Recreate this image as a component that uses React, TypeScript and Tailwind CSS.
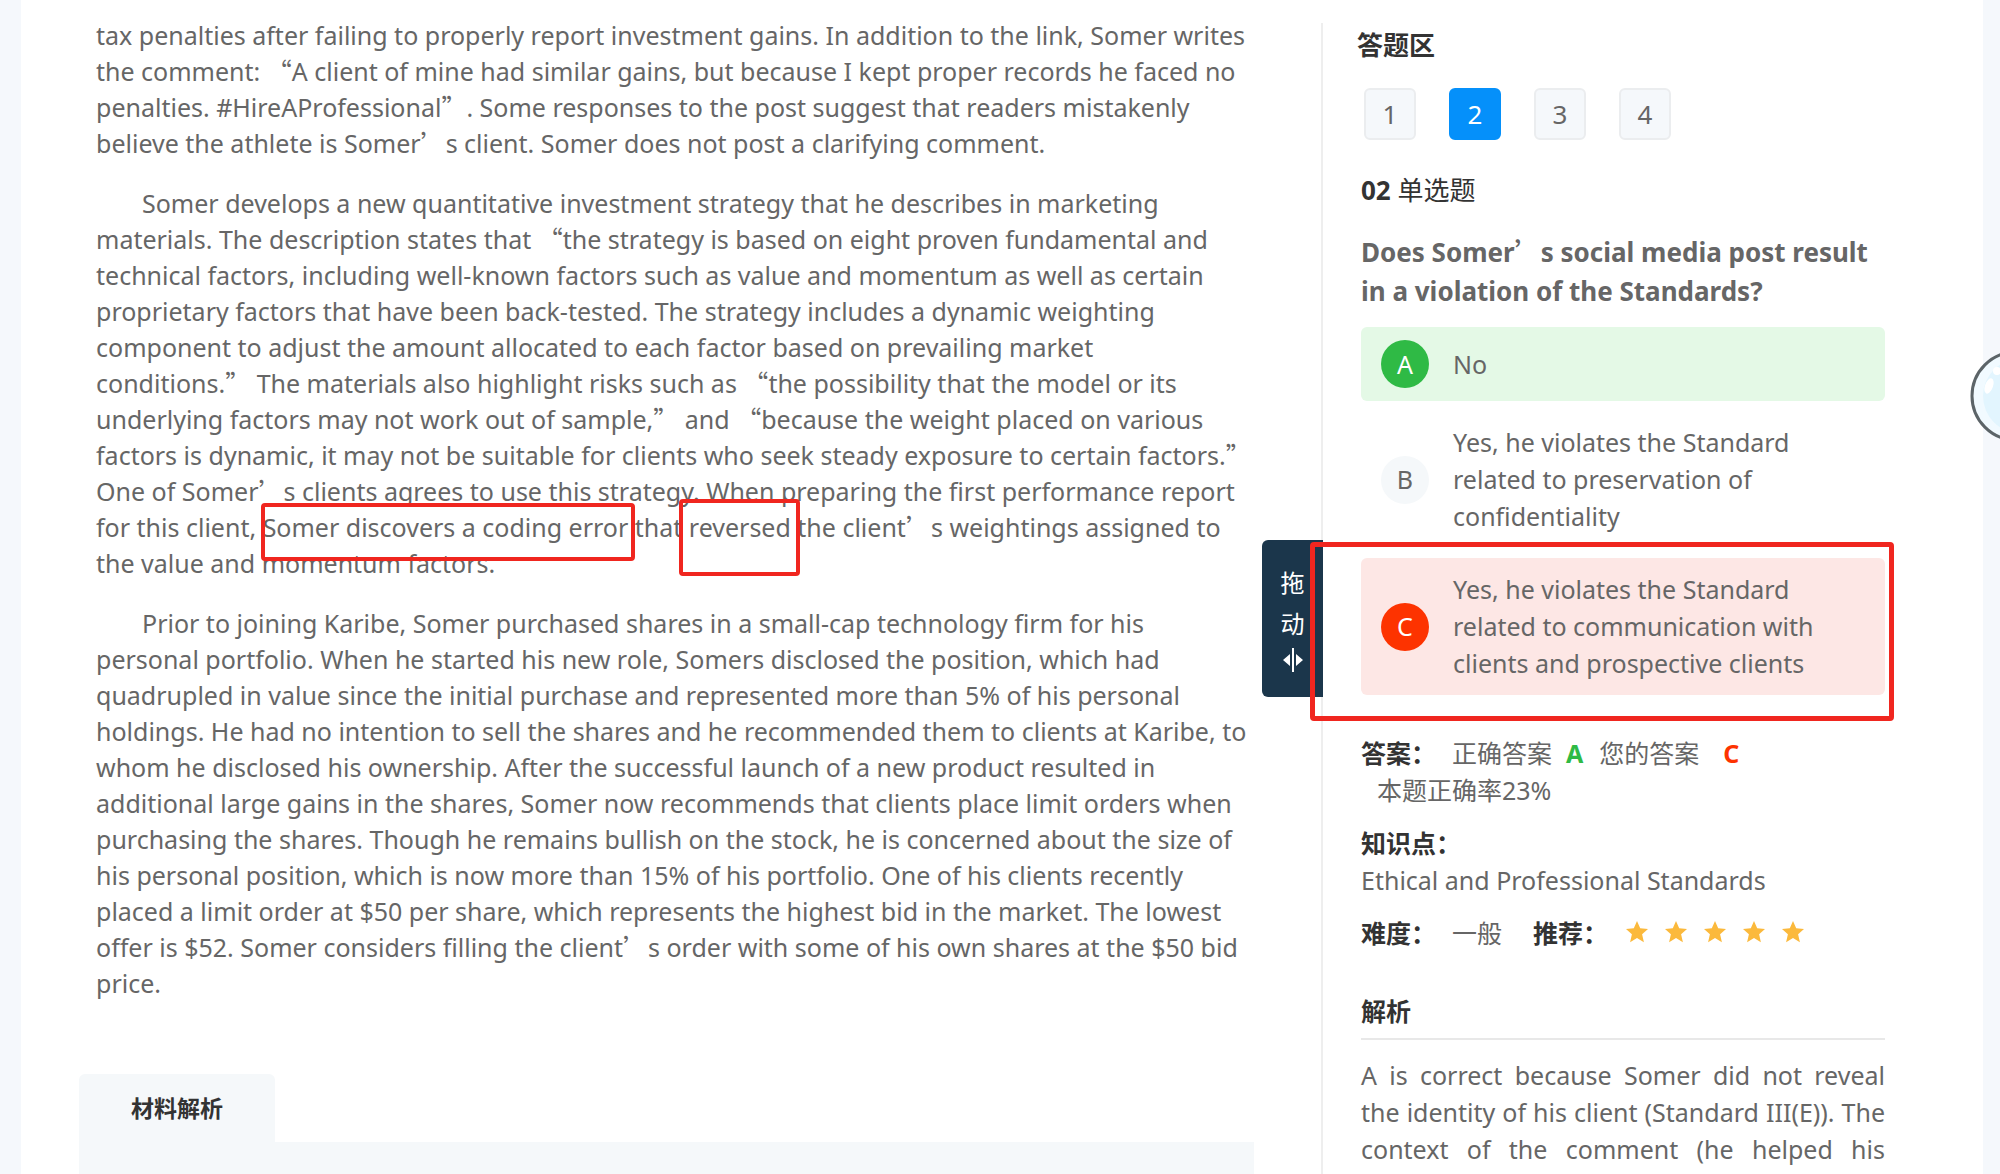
import React, { useState } from 'react';
import clsx from 'clsx';

interface Option {
  key: string;
  lines: string[];
}

const PARAGRAPHS = [
  {
    indent: false,
    lines: [
      'tax penalties after failing to properly report investment gains. In addition to the link, Somer writes',
      'the comment: “A client of mine had similar gains, but because I kept proper records he faced no',
      'penalties. #HireAProfessional”. Some responses to the post suggest that readers mistakenly',
      'believe the athlete is Somer’s client. Somer does not post a clarifying comment.',
    ],
  },
  {
    indent: true,
    lines: [
      'Somer develops a new quantitative investment strategy that he describes in marketing',
      'materials. The description states that “the strategy is based on eight proven fundamental and',
      'technical factors, including well-known factors such as value and momentum as well as certain',
      'proprietary factors that have been back-tested. The strategy includes a dynamic weighting',
      'component to adjust the amount allocated to each factor based on prevailing market',
      'conditions.” The materials also highlight risks such as “the possibility that the model or its',
      'underlying factors may not work out of sample,” and “because the weight placed on various',
      'factors is dynamic, it may not be suitable for clients who seek steady exposure to certain factors.”',
      'One of Somer’s clients agrees to use this strategy. When preparing the first performance report',
      'for this client, Somer discovers a coding error that reversed the client’s weightings assigned to',
      'the value and momentum factors.',
    ],
  },
  {
    indent: true,
    lines: [
      'Prior to joining Karibe, Somer purchased shares in a small-cap technology firm for his',
      'personal portfolio. When he started his new role, Somers disclosed the position, which had',
      'quadrupled in value since the initial purchase and represented more than 5% of his personal',
      'holdings. He had no intention to sell the shares and he recommended them to clients at Karibe, to',
      'whom he disclosed his ownership. After the successful launch of a new product resulted in',
      'additional large gains in the shares, Somer now recommends that clients place limit orders when',
      'purchasing the shares. Though he remains bullish on the stock, he is concerned about the size of',
      'his personal position, which is now more than 15% of his portfolio. One of his clients recently',
      'placed a limit order at $50 per share, which represents the highest bid in the market. The lowest',
      'offer is $52. Somer considers filling the client’s order with some of his own shares at the $50 bid',
      'price.',
    ],
  },
];

const OPTIONS: Option[] = [
  { key: 'A', lines: ['No'] },
  {
    key: 'B',
    lines: ['Yes, he violates the Standard', 'related to preservation of', 'confidentiality'],
  },
  {
    key: 'C',
    lines: [
      'Yes, he violates the Standard',
      'related to communication with',
      'clients and prospective clients',
    ],
  },
];

const CORRECT = 'A';

// curly quotes take the full-width glyphs of the Chinese font
const Quoted: React.FC<{ text: string }> = ({ text }) => (
  <>
    {text.split(/([“”’])/).map((part, i) =>
      /[“”’]/.test(part) ? (
        <span key={i} className="font-['Noto_Sans_CJK_SC',sans-serif] leading-none">
          {part}
        </span>
      ) : (
        part
      )
    )}
  </>
);

const Star = () => (
  <svg className="h-[22px] w-[22px]" viewBox="0 0 22 22" fill="#fbb93c">
    <path d="M11 0l3.200 7.300 7.800.7-5.900 5.200 1.800 8L11 17l-6.900 4.200 1.800-8L0 8l7.800-.7z" />
  </svg>
);

const OptionRow: React.FC<{ option: Option; chosen: string; onChoose: (key: string) => void }> = ({
  option,
  chosen,
  onChoose,
}) => {
  const isCorrect = option.key === CORRECT;
  const isWrong = option.key === chosen && !isCorrect;

  return (
    <label
      className={clsx(
        'flex cursor-pointer items-center gap-6 rounded-md px-5 py-[13px]',
        isCorrect && 'bg-[#e4f9e6]',
        isWrong && 'bg-[#fde7e5]'
      )}
    >
      <input
        type="radio"
        name="answer"
        className="sr-only"
        checked={option.key === chosen}
        onChange={() => onChoose(option.key)}
      />
      <span
        className={clsx(
          'flex size-12 shrink-0 items-center justify-center rounded-full',
          isCorrect && 'bg-[#2fba45] text-white',
          isWrong && 'bg-[#fd3300] text-white',
          !isCorrect && !isWrong && 'bg-[#f5f8fa]'
        )}
      >
        {option.key}
      </span>
      <span>
        {option.lines.map((line) => (
          <span key={line} className="block">
            {line}
          </span>
        ))}
      </span>
    </label>
  );
};

const App: React.FC = () => {
  const [current, setCurrent] = useState(2);
  const [chosen, setChosen] = useState('C');

  return (
    <div className="relative h-screen overflow-hidden bg-[#f5f8fc] pr-[17px] pl-[21px] font-['Noto_Sans','Noto_Sans_CJK_SC',sans-serif] text-[25px] text-[#666666]">
      <main className="flex min-h-full bg-white">
        <article className="min-w-0 flex-1 pr-[67px] pl-[58px]">
          <div className="flex flex-col gap-6 pt-[17px] pl-[17px] leading-9 whitespace-nowrap">
            {PARAGRAPHS.map((p) => (
              <p key={p.lines[0]} className={clsx(p.indent && 'indent-[46px]')}>
                {p.lines.map((line, i) => (
                  <React.Fragment key={line}>
                    {i > 0 && <br />}
                    <Quoted text={line} />
                  </React.Fragment>
                ))}
              </p>
            ))}
          </div>
          <h2 className="mt-[73px] flex h-[68px] w-[196px] items-center justify-center rounded-t-md bg-[#f5f8fa] text-[23px] font-bold text-[#333333]">
            材料解析
          </h2>
          <div className="h-20 bg-[#f5f8fa]"></div>
        </article>

        <aside className="relative mt-[23px] w-[662px] shrink-0 border-l-2 border-[#eeeeee] pr-[98px] pl-[38px] leading-[37px]">
          <button
            type="button"
            className="absolute top-[517px] right-full flex h-[157px] w-[61px] flex-col items-center justify-center rounded-l-md bg-[#1b364b] pb-1 text-[24px] leading-[41px] text-white"
          >
            <span>拖</span>
            <span>动</span>
            <svg className="mt-1 h-6 w-5" viewBox="0 0 20 24" fill="currentColor">
              <path d="M0 12l7-6v12zM20 12l-7-6v12zM9 0h2v24H9z" />
            </svg>
          </button>

          <h2 className="-ml-1 pt-1 text-[26px] font-bold text-[#333333]">答题区</h2>
          <nav className="mt-6 ml-[3px] flex gap-[33px]">
            {[1, 2, 3, 4].map((n) => (
              <button
                key={n}
                type="button"
                onClick={() => setCurrent(n)}
                className={clsx(
                  'size-[52px] rounded-md border-2 text-[26px]',
                  n === current
                    ? 'border-[#0590fa] bg-[#0590fa] text-white'
                    : 'border-[#ebedef] bg-[#f5f8fb]'
                )}
              >
                {n}
              </button>
            ))}
          </nav>
          <p className="mt-8 text-[26px] text-[#333333]">
            <b>02</b> 单选题
          </p>
          <h3 className="mt-6 text-[26px] leading-[39px] font-bold">
            <Quoted text="Does Somer’s social media post result" />
            <br />
            in a violation of the Standards?
          </h3>

          <div className="mt-4 flex flex-col gap-[10px]">
            {OPTIONS.map((option) => (
              <OptionRow key={option.key} option={option} chosen={chosen} onChoose={setChosen} />
            ))}
          </div>

          <div className="mt-10">
            <div className="flex">
              <b className="w-[91px] text-[#333333]">答案：</b>
              <span>正确答案</span>
              <b className="ml-[14px] text-[#2fba45]">A</b>
              <span className="ml-4">您的答案</span>
              <b className="ml-6 text-[#fd3300]">C</b>
            </div>
            <p className="ml-4">本题正确率23%</p>
          </div>
          <div className="mt-4">
            <b className="block text-[#333333]">知识点：</b>
            <p>Ethical and Professional Standards</p>
          </div>
          <div className="mt-4 flex items-center">
            <b className="w-[91px] text-[#333333]">难度：</b>
            <span className="w-[81px]">一般</span>
            <b className="w-[93px] text-[#333333]">推荐：</b>
            <span className="flex gap-[17px] pb-1">
              {[1, 2, 3, 4, 5].map((n) => (
                <Star key={n} />
              ))}
            </span>
          </div>
          <h3 className="mt-[41px] border-b-2 border-[#e8e8e8] pb-2 font-bold text-[#333333]">
            解析
          </h3>
          <p className="mt-[17px] text-justify [text-align-last:justify]">
            A is correct because Somer did not reveal the identity of his client (Standard III(E)). The
            context of the comment (he helped his
          </p>
        </aside>
      </main>

      <div className="absolute top-[503px] left-[261px] h-[58px] w-[374px] rounded-sm border-4 border-[#f0261f]"></div>
      <div className="absolute top-[499px] left-[679px] h-[77px] w-[121px] rounded-sm border-4 border-[#f0261f]"></div>
      <div className="absolute top-[542px] left-[1310px] h-[179px] w-[584px] rounded-sm border-5 border-[#f0261f]"></div>

      <svg className="absolute top-[350px] -right-[62px] size-[92px]" viewBox="0 0 92 92">
        <circle cx="46" cy="46" r="44" fill="#f1faff" stroke="#5c6468" strokeWidth="3" />
        <circle cx="50" cy="46" r="37" fill="#e2f5fe" />
        <ellipse cx="19" cy="36" rx="4" ry="8" fill="#fff" transform="rotate(20 19 36)" />
        <circle cx="27" cy="21" r="4" fill="#fff" />
      </svg>
    </div>
  );
};

export default App;
